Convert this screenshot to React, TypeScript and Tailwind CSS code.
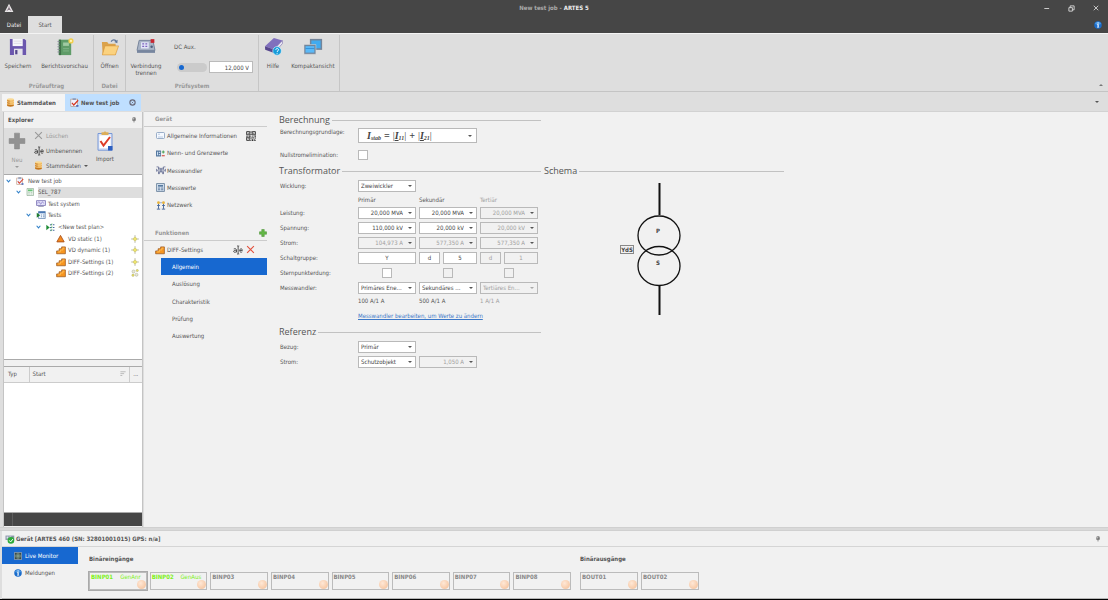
import type { ReactNode } from 'react';

type IconProps = { className?: string };

function Svg({ box = '0 0 16 16', className = 'size-2.5', children }: { box?: string; className?: string; children: ReactNode }) {
  return (
    <svg viewBox={box} className={`shrink-0 ${className}`} fill="none" aria-hidden="true">
      {children}
    </svg>
  );
}

const LogoIcon = () => (
  <Svg className="size-[10px]">
    <path d="M8 1 15 14.500H1z" fill="#e8e6e6" />
    <path d="M8 5.500v4M8 9.500l-3.500 2.500M8 9.500l3.500 2.500" stroke="#80607c" strokeWidth="1.200" />
    <circle cx="8" cy="9.500" r="1.300" fill="#555" />
  </Svg>
);

const SaveIcon = () => (
  <Svg className="size-[18px]">
    <path d="M.8.8h12.900L15.200 2.200v13H.8z" fill="#6b57ae" />
    <path d="M3.200.8h9v6.400h-9z" fill="#f6f6fa" />
    <path d="M4.400 9.500h7.700v5.700H4.400z" fill="#e3e1ea" />
    <path d="M5.500 10.700h2v3.800h-2z" fill="#54468c" />
    <path d="M4.200 2.800h7M4.200 4.800h7" stroke="#d5d3e0" strokeWidth=".6" />
  </Svg>
);

const ReportIcon = () => (
  <Svg className="size-[18px]">
    <path d="M2.500 1.500h11v13.700h-11z" fill="#5f9c68" />
    <path d="M2.500 1.500h2v13.700h-2z" fill="#3f7148" />
    <path d="M6.300 4h5.200v3H6.300z" fill="#9fcaa2" />
    <path d="M6.300 9.500h5.200M6.300 11.500h5.200" stroke="#83b78a" strokeWidth=".8" />
    <path d="M1.300 3.200h2M1.300 5.500h2M1.300 7.800h2M1.300 10.100h2M1.300 12.400h2" stroke="#889" strokeWidth=".8" />
    <circle cx="13.300" cy="2.600" r="2.300" fill="#f2cf4e" />
    <circle cx="13.300" cy="2.600" r="1" fill="#fff6bd" />
  </Svg>
);

const FolderIcon = () => (
  <Svg className="size-[18px]">
    <path d="M.8 3.500h4.700l1.200 1.500H13v10H1.500z" fill="#dba24a" />
    <path d="M3.500 7h12.100l-2.800 8H1.200z" fill="#fbd27f" stroke="#d9993c" strokeWidth=".6" />
    <path d="M9 3.200c1.300-2 3.700-2 4.800.2" stroke="#60779a" strokeWidth="1.100" />
    <path d="m14.800 1.500-.3 3.100-2.700-1.100z" fill="#60779a" />
  </Svg>
);

const DisconnectIcon = () => (
  <Svg className="size-5">
    <path d="M2.500 2.700h11l1.700 8H.8z" fill="#a9b4c6" stroke="#6d7b93" strokeWidth=".7" />
    <path d="M4 4.200h6.200v5H4z" fill="#e2e5f7" />
    <path d="M5 5.500h1.500M7.500 5.500H9M5 7.500h1.500M7.500 7.500H9" stroke="#7b63bd" strokeWidth=".9" />
    <path d="M.8 10.700h14.400v2H.8z" fill="#77869f" />
    <path d="M11.700 1.700h3v3h-3z" fill="#c72630" />
    <circle cx="12.500" cy="7.800" r="1" fill="#4d5f7d" />
  </Svg>
);

const HelpBookIcon = () => (
  <Svg className="size-[19px]">
    <path d="M8.300.8 15.500 3l-7 7.500L.8 7.700z" fill="#8070bd" />
    <path d="m.8 7.700 7.700 2.800v3L1 10.700z" fill="#57478e" />
    <path d="m8.500 10.500 7-7.500v2.500l-7 8z" fill="#eeecf5" stroke="#7567aa" strokeWidth=".5" />
    <circle cx="11" cy="11.700" r="3.600" fill="#159cda" stroke="#e9f6fb" strokeWidth=".5" />
    <path d="M9.900 10.900c0-1.600 2.500-1.500 2.300 0-.1.800-1.200.8-1.200 1.700" stroke="#fff" strokeWidth=".8" />
    <circle cx="11" cy="13.700" r=".5" fill="#fff" />
  </Svg>
);

const CompactIcon = () => (
  <Svg className="size-5">
    <path d="M5.500 1.500h9.800v8.800H5.500z" fill="#73859a" />
    <path d="M6.700 2.800h7.400v6.200H6.700z" fill="#41abf0" />
    <path d="M.8 6h9.500v7.800H.8z" fill="#73859a" stroke="#dedede" strokeWidth=".4" />
    <path d="M2 7.300h7.100v5.200H2z" fill="#5ab9f8" />
    <path d="M2 9.200h7.100" stroke="#2f8fd8" strokeWidth=".7" />
  </Svg>
);

const DatabaseIcon = () => (
  <Svg className="size-[9px]">
    <path d="M2 2.500h5v11H2z" fill="#cf7f21" />
    <path d="M7 2.500h7v11H7z" fill="#efb152" />
    <ellipse cx="8" cy="2.500" rx="6" ry="2" fill="#f9d993" />
    <ellipse cx="8" cy="13.500" rx="6" ry="2" fill="#c4761c" />
    <path d="M2 6.200c2 1.600 10 1.600 12 0M2 10c2 1.600 10 1.600 12 0" stroke="#fbe2a9" strokeWidth="1.300" />
  </Svg>
);

const JobIcon = ({ className = 'size-[9px]' }: IconProps) => (
  <Svg className={className}>
    <path d="M1 1.500h13v13.700H1z" fill="#b98a6a" />
    <path d="M2 2.500h11v11.700H2z" fill="#eef2ff" />
    <path d="M4.500.5h6v3h-6z" fill="#8c9bb8" />
    <path d="m3.500 8.500 3.200 4L14.500 4" stroke="#d63822" strokeWidth="2.200" />
    <path d="M11 12.500h4v3h-4z" fill="#4469c1" />
  </Svg>
);

const ImportIcon = () => (
  <Svg box="0 0 16 20" className="h-5 w-4">
    <path d="M1 2.500h14v16.700H1z" fill="#dbe4f6" stroke="#6d91d6" strokeWidth=".9" />
    <path d="M2.500 4.500h11v12.500h-11z" fill="#fff" />
    <path d="M4.500 1.300h7V4h-7z" fill="#dcae58" />
    <circle cx="8" cy="1.700" r="1.300" fill="#dcae58" />
    <path d="m3.500 10 3 4.500 6.500-8.500" stroke="#dd3c28" strokeWidth="2" />
    <path d="M11 15h4.500v4.500H11z" fill="#2c5fc0" />
  </Svg>
);

const PinIcon = () => (
  <Svg className="size-[6px]">
    <path d="M5 2h6v6H5zM3 8.500h10M8 9v5.500M10 2v6" stroke="#555" strokeWidth="1.700" />
  </Svg>
);

const PlusIcon = () => (
  <Svg className="size-[18px]">
    <path d="M5.800 1h4.400v4.800H15v4.400h-4.800V15H5.800v-4.800H1V5.800h4.800z" fill="#929292" stroke="#858585" strokeWidth=".5" />
  </Svg>
);

const CrossIcon = ({ className = 'size-[9px] text-[#999]' }: IconProps) => (
  <Svg className={className}>
    <path d="m2 2 12 12M14 2 2 14" stroke="currentColor" strokeWidth="2" />
  </Svg>
);

const RenameIcon = () => (
  <Svg className="size-[10px]">
    <path d="M1.200 6.300c2.800-1 4.300 0 4.300 1.700v3.800M5.500 8.500C3 8.500 1 8.800 1 10.300s3.200 2.100 4.500 0" stroke="#333" strokeWidth="1.300" />
    <path d="M10.700 8.700h4.300c0-3.500-4.300-3.500-4.300.2 0 2.700 2.600 3.300 4.100 2" stroke="#333" strokeWidth="1.300" />
    <path d="M8.200 2v12M6.500 1.500c1 0 1.300.2 1.700.7.400-.5.700-.7 1.700-.7M6.500 14.500c1 0 1.300-.2 1.700-.7.400.5.700.7 1.700.7" stroke="#222" strokeWidth="1.200" />
  </Svg>
);

const DeviceIcon = () => (
  <Svg className="size-2">
    <path d="M2 1h13v14H2z" fill="#e8f3ea" stroke="#84a48a" strokeWidth="1.200" />
    <path d="M4 3h9v3.500H4z" fill="#65c274" />
    <path d="M4.500 9h3M4.500 12h3M9.500 9h3M9.500 12h3" stroke="#92a896" />
  </Svg>
);

const TestSystemIcon = () => (
  <Svg box="0 0 18 12" className="h-[7px] w-[10px]">
    <path d="M1 .8h16v8.700H1z" fill="#e5e4fa" stroke="#695fa9" strokeWidth="1.300" />
    <path d="M3 6c1-4 3-4 4-1s2 3 3 0 3-2 4 1" stroke="#6a58b8" />
    <path d="M4 11.200h10" stroke="#77779b" strokeWidth="1.300" />
  </Svg>
);

const TestsIcon = () => (
  <Svg box="0 0 18 16" className="h-2 w-[10px]">
    <path d="M4 1h13.500v14H4z" fill="#ecf2fb" stroke="#456b9f" strokeWidth="1.200" />
    <path d="M4 1h13.500v3.500H4z" fill="#4b78b4" />
    <path d="M9 8h2M13 8h3M9 11.500h2M13 11.500h3" stroke="#5177a5" strokeWidth="1.400" />
    <path d="m.5 3.500 7 5-7 5z" fill="#1f7c2f" />
  </Svg>
);

const PlanIcon = () => (
  <Svg className="size-[9px]">
    <path d="M7 3h2.500M7 8h2.500M7 13h2.500M12 3h3M12 8h3M12 13h3" stroke="#47699f" strokeWidth="1.800" />
    <path d="M10.500 1 9 4.500M10.500 6 9 9.500M10.500 11 9 14.500" stroke="#35a04a" strokeWidth="1.300" />
    <path d="m.5 3 6 5-6 5z" fill="#1f8c36" />
  </Svg>
);

const StaticIcon = () => (
  <Svg className="size-[9px]">
    <path d="M8 2.500 14.500 14h-13z" fill="#f58a1f" stroke="#a84f17" strokeWidth="1.600" strokeLinejoin="round" />
  </Svg>
);

const StepsIcon = () => (
  <Svg className="size-[10px]">
    <path d="M1 9.500h4V6h4V3h6v11H1z" fill="#f7951f" stroke="#9c5a20" strokeWidth="1.200" strokeLinejoin="round" />
    <path d="M3 11h4V8h4V5h2.500" stroke="#ffc25c" strokeWidth="1.300" />
  </Svg>
);

const SparkIcon = () => (
  <Svg className="size-2">
    <path d="M8 0v16M0 8h16" stroke="#9a9a86" strokeWidth="1.200" />
    <path d="M8 3.500 12.500 8 8 12.500 3.500 8z" fill="#efe56c" stroke="#b9b26a" />
  </Svg>
);

const SparksIcon = () => (
  <Svg className="size-2">
    <circle cx="5" cy="5" r="3" fill="#e9e9d4" stroke="#a7a794" />
    <circle cx="12.500" cy="3" r="2.200" fill="#f0e562" stroke="#a7a764" />
    <circle cx="4" cy="12.500" r="2.300" fill="#f0e562" stroke="#a7a764" />
    <circle cx="11" cy="11.500" r="3" fill="#e9e9d4" stroke="#a7a794" />
  </Svg>
);

const CardIcon = () => (
  <Svg box="0 0 18 14" className="h-[7px] w-[9px]">
    <rect x="1" y="1" width="16" height="12" rx="2" fill="#f5f9ff" stroke="#7c96ba" strokeWidth="1.500" />
    <path d="M4 4.500h4M4 10h10" stroke="#a6bcd8" strokeWidth="1.500" />
  </Svg>
);

const LimitsIcon = () => (
  <Svg box="0 0 18 14" className="h-[7px] w-[9px]">
    <path d="M0 1h10v12H0z" fill="#55789f" />
    <path d="M2 3.500h2v7H2zM5.500 3.500h3v2.500h-3zM5.500 8h3v2.500h-3z" fill="#c9dcf0" />
    <path d="M11.500 4h6M14.500 1v6" stroke="#3c9a48" strokeWidth="1.800" />
    <path d="M11.500 11.500h6" stroke="#d03a30" strokeWidth="2" />
  </Svg>
);

const ConverterIcon = () => (
  <Svg box="0 0 18 16" className="h-[9px] w-[10px]">
    <path d="M1 1.500h3.500v4M13.500 5.500v-4H17M1 5v5M17 5v5M6 14.500v-3M12 14.500v-3M4.500 5.500c-2 1-2 4 0 5v4M13.500 5.500c2 1 2 4 0 5v4" stroke="#4b5580" strokeWidth="1.200" />
    <ellipse cx="7" cy="7.500" rx="1.600" ry="4.500" stroke="#3f4d7b" strokeWidth="1.200" />
    <ellipse cx="11" cy="7.500" rx="1.600" ry="4.500" stroke="#3f4d7b" strokeWidth="1.200" />
  </Svg>
);

const ReadingsIcon = () => (
  <Svg className="size-[9px]">
    <path d="M1 1h14v14H1z" fill="#d7e3f1" stroke="#5d7692" strokeWidth="1.400" />
    <path d="M3.500 3.500h9v3h-9z" fill="#577a9f" />
    <path d="M3.500 9h4M9 9h4M3.500 12h4M9 12h4" stroke="#4e6c90" strokeWidth="1.500" />
  </Svg>
);

const NetworkIcon = () => (
  <Svg box="0 0 18 16" className="h-[9px] w-[10px]">
    <path d="M4.500 5v9M1.500 14.500h6M13.500 5v9M10.500 14.500h6M2 8h5M11 8h5" stroke="#47679a" strokeWidth="1.700" />
    <path d="M7 3h4" stroke="#7d93b5" strokeWidth="1.300" />
    <circle cx="4.500" cy="3" r="2.500" fill="#e7b23a" />
    <circle cx="13.500" cy="3" r="2.500" fill="#e7b23a" />
  </Svg>
);

const QrIcon = () => (
  <Svg className="size-[10px]">
    <path d="M1 1h5v5H1zM10 1h5v5h-5zM1 10h5v5H1z" stroke="#333" strokeWidth="1.500" />
    <path
      d="M2.700 2.700h1.600v1.600H2.700zM11.700 2.700h1.600v1.600h-1.600zM2.700 11.700h1.600v1.600H2.700zM7.400 0h1.200v3H7.400zM7 4.500h2v2H7zM0 7.400h3v1.200H0zM4.500 7h3v2h-3zM9 7.400h3v1.400H9zM13.500 7H16v2h-2.500zM7.400 10h1.500v2.500H7.400zM10 10h2.500v2H10zM13.500 10.500H16V12h-2.500zM9 13h2.500v2.800H9zM12.500 13H14v3h-1.500zM15 14h1v2h-1zM7 14.500h1V16H7z"
      fill="#333"
    />
  </Svg>
);

const AddIcon = () => (
  <Svg className="size-2">
    <path d="M5.500 1h5v4.500H15v5h-4.500V15h-5v-4.500H1v-5h4.500z" fill="#63b746" stroke="#428d2d" />
  </Svg>
);

const ConnectedIcon = () => (
  <Svg className="size-[10px]">
    <path d="M.8 2.500h14v7h-14z" fill="#8b95a8" />
    <path d="M2.500 4h3v3h-3zM7 4h3v3H7z" fill="#dde3ee" />
    <circle cx="9.500" cy="10.200" r="5.300" fill="#2daa3a" />
    <path d="m6.800 10.200 2.200 2.500 3.500-4.500" stroke="#fff" strokeWidth="1.600" />
  </Svg>
);

const MonitorIcon = () => (
  <Svg className="size-2">
    <path d="M.8.8h14.400v14.400H.8z" fill="#3b4a48" stroke="#b7c0c8" strokeWidth="1.200" />
    <path d="M8 2v12M2 8h12" stroke="#b7d9bc" strokeWidth="1.300" />
    <path d="M2.500 5h11M2.500 11h11M5 2.500v11M11 2.500v11" stroke="#7d9a86" strokeWidth=".6" />
  </Svg>
);

const InfoIcon = () => (
  <Svg className="size-2">
    <circle cx="8" cy="8" r="7.500" fill="#1a6ccb" />
    <path d="M2 6c2-6 10-6 12 0-3 2-9 2-12 0z" fill="#4d9be6" />
    <path d="M7 2.800h2.400V5H7zM6.200 6.500h3.200v5.300h1v1.400H6v-1.400h1V8h-.8z" fill="#fff" />
  </Svg>
);

const Caret = ({ className = '' }: IconProps) => (
  <svg viewBox="0 0 8 4" className={`h-0.5 w-1 shrink-0 ${className}`} aria-hidden="true">
    <path d="M0 0h8L4 4z" fill="currentColor" />
  </svg>
);

const Chevron = () => (
  <Svg box="0 0 8 6" className="h-[4px] w-[5px]">
    <path d="m1 1 3 3.500L7 1" stroke="#2e7fc8" strokeWidth="1.700" />
  </Svg>
);

function RibbonButton({ icon, label, className }: { icon: ReactNode; label: string; className: string }) {
  return (
    <button type="button" className={`flex flex-col items-center ${className}`}>
      <span className="flex h-[23px] items-center">{icon}</span>
      <span className="mt-1 leading-[7px]">{label}</span>
    </button>
  );
}

function RibbonGroup({ caption, className, children }: { caption: string; className: string; children: ReactNode }) {
  return (
    <section className={`flex flex-col border-r border-[#c6c6c6] ${className}`}>
      <div className="flex flex-1">{children}</div>
      <h2 className="h-[9px] text-center font-bold text-[#999]">{caption}</h2>
    </section>
  );
}

const tree = [
  { label: 'New test job', icon: <JobIcon className="size-2" />, open: true, pad: 'pl-0.5' },
  { label: 'SEL_787', icon: <DeviceIcon />, open: true, pad: 'pl-3', selected: true },
  { label: 'Test system', icon: <TestSystemIcon />, pad: 'pl-[22px]' },
  { label: 'Tests', icon: <TestsIcon />, open: true, pad: 'pl-[22px]' },
  { label: '<New test plan>', icon: <PlanIcon />, open: true, pad: 'pl-8' },
  { label: 'VD static (1)', icon: <StaticIcon />, pad: 'pl-[42px]', end: <SparkIcon /> },
  { label: 'VD dynamic (1)', icon: <StepsIcon />, pad: 'pl-[42px]', end: <SparkIcon /> },
  { label: 'DIFF-Settings (1)', icon: <StepsIcon />, pad: 'pl-[42px]', end: <SparkIcon /> },
  { label: 'DIFF-Settings (2)', icon: <StepsIcon />, pad: 'pl-[42px]', end: <SparksIcon /> },
];

function Explorer() {
  return (
    <aside className="mt-px flex w-[140px] shrink-0 flex-col border-x border-[#c4c4c4] bg-[#f1f1f1]">
      <header className="flex h-4 shrink-0 items-center justify-between pr-[5px] pl-1">
        <h2 className="font-bold">Explorer</h2>
        <button type="button" aria-label="Anheften"><PinIcon /></button>
      </header>
      <div className="flex h-[46px] shrink-0 bg-[#dedede]">
        <button type="button" className="flex w-[26px] flex-col items-center pt-1 text-[#999]">
          <PlusIcon />
          <span className="mt-1.5">Neu</span>
          <Caret className="mt-0.5" />
        </button>
        <div className="flex w-[58px] flex-col pl-1 text-nowrap">
          <button type="button" className="flex h-[15px] items-center gap-[3px] text-[#999]"><CrossIcon />Löschen</button>
          <button type="button" className="flex h-[15px] items-center gap-0.5"><RenameIcon />Umbenennen</button>
          <button type="button" className="flex h-[15px] items-center gap-[3px]"><DatabaseIcon />Stammdaten<Caret /></button>
        </div>
        <button type="button" className="flex w-[34px] flex-col items-center pt-[3px]">
          <ImportIcon />
          <span className="mt-1">Import</span>
        </button>
      </div>
      <div className="h-[186px] shrink-0 border-y border-[#aaa] bg-white">
        <ul className="flex h-[104px] flex-col">
          {tree.map((n) => (
            <li key={n.label} className={`flex flex-1 items-center ${n.pad}`}>
              <span className="flex w-[10px] shrink-0">{n.open && <Chevron />}</span>
              <span className="flex w-3 shrink-0">{n.icon}</span>
              <span className={`flex flex-1 items-center self-stretch text-nowrap ${n.selected ? 'bg-[#dedede]' : ''}`}>{n.label}</span>
              {n.end && <span className="pr-[3px]">{n.end}</span>}
            </li>
          ))}
        </ul>
      </div>
      <div className="mt-1.5 flex flex-1 flex-col border-t border-[#aaa] bg-white">
        <table className="w-full table-fixed border-collapse text-left">
          <thead>
            <tr className="h-[15px] border-b border-[#ccc] bg-[#f1f1f1]">
              <th className="w-[25px] border-r border-[#ccc] pl-1 font-normal">Typ</th>
              <th className="border-r border-[#ccc] px-[3px] font-normal">
                <span className="flex items-center justify-between">
                  Start
                  <Svg className="size-[6px]"><path d="M1 2h14M1 7h10M1 12h5" stroke="#aaa" strokeWidth="2" /></Svg>
                </span>
              </th>
              <th className="w-[13px] text-center font-normal">...</th>
            </tr>
          </thead>
          <tbody />
        </table>
      </div>
      <div className="mb-px h-[14px] shrink-0 border-t border-[#aaa] bg-[#464646] pl-2">
        <div className="h-full w-px bg-[#5d5d5d]" />
      </div>
    </aside>
  );
}

const deviceLinks = [
  { label: 'Allgemeine Informationen', icon: <CardIcon /> },
  { label: 'Nenn- und Grenzwerte', icon: <LimitsIcon /> },
  { label: 'Messwandler', icon: <ConverterIcon /> },
  { label: 'Messwerte', icon: <ReadingsIcon /> },
  { label: 'Netzwerk', icon: <NetworkIcon /> },
];

const functionLinks = ['Allgemein', 'Auslösung', 'Charakteristik', 'Prüfung', 'Auswertung'];

function Navigation() {
  return (
    <nav className="flex w-[123px] shrink-0 flex-col">
      <h2 className="flex h-[15px] items-center border-b border-[#ccc] pl-[11px] font-bold text-[#999]">Gerät</h2>
      <ul className="flex h-[87px] flex-col">
        {deviceLinks.map((l, i) => (
          <li key={l.label} className="flex flex-1 items-center pr-[11px] pl-3">
            <a href="#" className="flex flex-1 items-center text-nowrap"><span className="flex w-[11px] shrink-0">{l.icon}</span>{l.label}</a>
            {i === 0 && <button type="button" aria-label="QR-Code"><QrIcon /></button>}
          </li>
        ))}
      </ul>
      <div className="mt-[11px] flex h-4 items-center justify-between border-b border-[#ccc] pl-[11px]">
        <h2 className="font-bold text-[#999]">Funktionen</h2>
        <button type="button" aria-label="Funktion hinzufügen"><AddIcon /></button>
      </div>
      <div className="flex h-[17px] items-center gap-[3px] pr-3 pl-[11px]">
        <a href="#" className="flex flex-1 items-center gap-0.5 text-nowrap"><StepsIcon />DIFF-Settings</a>
        <button type="button" aria-label="Umbenennen"><RenameIcon /></button>
        <button type="button" aria-label="Löschen"><CrossIcon className="size-[9px] text-[#e2503c]" /></button>
      </div>
      <ul className="flex h-[87px] flex-col pl-[17px]">
        {functionLinks.map((l, i) => (
          <li key={l} className="flex flex-1">
            <a href="#" className={`flex flex-1 items-center pl-[11px] ${i === 0 ? 'bg-[#1768d0] text-white' : ''}`}>{l}</a>
          </li>
        ))}
      </ul>
    </nav>
  );
}

function Section({ title, className = '', children }: { title: string; className?: string; children: ReactNode }) {
  return (
    <section className={className}>
      <h2 className="flex h-3 items-center gap-0.5 font-['Open_Sans',sans-serif] text-[9px] leading-3">
        {title}
        <span className="h-px flex-1 bg-[#c2c2c2]" />
      </h2>
      {children}
    </section>
  );
}

const box = 'h-3 w-full rounded-none border border-[#b9b9b9]';
const enabled = 'bg-white text-[#444]';
const disabled = 'bg-[#f1f1f1] text-[#a0a0a0]';

function Drop({ label, value, right = false, off = false }: { label: string; value: string; right?: boolean; off?: boolean }) {
  return (
    <span className="relative flex">
      <select
        aria-label={label}
        disabled={off}
        className={`${box} appearance-none pl-0.5 opacity-100 ${right ? 'pr-3 [text-align-last:right]' : 'pr-2'} ${off ? disabled : enabled}`}
      >
        <option>{value}</option>
      </select>
      <Caret className={`pointer-events-none absolute top-[5px] right-1 ${off && !right ? 'text-[#aaa]' : 'text-[#555]'}`} />
    </span>
  );
}

function Field({ label, value, off = false }: { label: string; value: string; off?: boolean }) {
  return <input aria-label={label} defaultValue={value} disabled={off} className={`${box} min-w-0 text-center ${off ? disabled : enabled}`} />;
}

function Check({ id, label, off = false }: { id?: string; label?: string; off?: boolean }) {
  return (
    <input
      type="checkbox"
      id={id}
      aria-label={label}
      disabled={off}
      className={`size-[10px] shrink-0 appearance-none border border-[#b9b9b9] ${off ? 'bg-[#f1f1f1]' : 'bg-white'}`}
    />
  );
}

function Row({ label, className = 'h-[15px]', children }: { label: string; className?: string; children: ReactNode }) {
  return (
    <div className={`grid grid-cols-[75px_58px_58px_58px] items-center gap-x-[3px] pl-px ${className}`}>
      <span>{label}</span>
      {children}
    </div>
  );
}

function Current({ index }: { index: string }) {
  return (
    <span>
      <span className="font-normal not-italic">|</span>
      <span className="underline">I</span>
      <sub className="text-[6px]">{index}</sub>
      <span className="font-normal not-italic">|</span>
    </span>
  );
}

function Form() {
  return (
    <div className="flex flex-col">
      <Section title="Berechnung">
        <div className="grid h-[19px] grid-cols-[75px_119px] gap-x-[3px] pt-0.5 pl-px">
          <span>Berechnungsgrundlage:</span>
          <button
            type="button"
            aria-haspopup="listbox"
            aria-label="Berechnungsgrundlage"
            className="flex h-[15px] items-center justify-between border border-[#b9b9b9] bg-white pr-1 pl-2"
          >
            <span className="flex gap-[3px] font-['Liberation_Serif',serif] text-[10px] font-bold text-[#444] italic">
              <span>I<sub className="text-[6px]">stab</sub></span>
              <span>=</span>
              <Current index="11" />
              <span>+</span>
              <Current index="21" />
            </span>
            <Caret />
          </button>
        </div>
        <div className="grid h-5 grid-cols-[75px_119px] items-center gap-x-[3px] pl-px">
          <label htmlFor="zero">Nullstromelimination:</label>
          <Check id="zero" />
        </div>
      </Section>

      <Section title="Transformator">
        <Row label="Wicklung:" className="h-[17px]"><Drop label="Wicklung" value="Zweiwickler" /></Row>
        <Row label="" className="h-[11px]">
          <span>Primär</span>
          <span>Sekundär</span>
          <span className="text-[#a0a0a0]">Tertiär</span>
        </Row>
        <Row label="Leistung:">
          <Drop right label="Leistung primär" value="20,000 MVA" />
          <Drop right label="Leistung sekundär" value="20,000 MVA" />
          <Drop right off label="Leistung tertiär" value="20,000 MVA" />
        </Row>
        <Row label="Spannung:">
          <Drop right label="Spannung primär" value="110,000 kV" />
          <Drop right label="Spannung sekundär" value="20,000 kV" />
          <Drop right off label="Spannung tertiär" value="20,000 kV" />
        </Row>
        <Row label="Strom:">
          <Drop right off label="Strom primär" value="104,973 A" />
          <Drop right off label="Strom sekundär" value="577,350 A" />
          <Drop right off label="Strom tertiär" value="577,350 A" />
        </Row>
        <Row label="Schaltgruppe:">
          <Field label="Schaltgruppe primär" value="Y" />
          <span className="grid grid-cols-[21px_1fr] gap-[3px]">
            <Field label="Schaltgruppe sekundär" value="d" />
            <Field label="Phasenlage sekundär" value="5" />
          </span>
          <span className="grid grid-cols-[21px_1fr] gap-[3px]">
            <Field off label="Schaltgruppe tertiär" value="d" />
            <Field off label="Phasenlage tertiär" value="1" />
          </span>
        </Row>
        <Row label="Sternpunkterdung:">
          <span className="flex justify-center"><Check label="Sternpunkterdung primär" /></span>
          <span className="flex justify-center"><Check off label="Sternpunkterdung sekundär" /></span>
          <span className="flex justify-center"><Check off label="Sternpunkterdung tertiär" /></span>
        </Row>
        <Row label="Messwandler:">
          <Drop label="Messwandler primär" value="Primäres Ene..." />
          <Drop label="Messwandler sekundär" value="Sekundäres ..." />
          <Drop off label="Messwandler tertiär" value="Tertiäres En..." />
        </Row>
        <Row label="" className="h-3">
          <span>100 A/1 A</span>
          <span>500 A/1 A</span>
          <span className="text-[#a0a0a0]">1 A/1 A</span>
        </Row>
        <div className="flex h-[17px] items-center pl-[79px]">
          <a href="#" className="text-[#3c78c8] underline">Messwandler bearbeiten, um Werte zu ändern</a>
        </div>
      </Section>

      <Section title="Referenz" className="mt-0.5">
        <Row label="Bezug:" className="h-[17px]"><Drop label="Bezug" value="Primär" /></Row>
        <Row label="Strom:" className="h-[14px]">
          <Drop label="Strombezug" value="Schutzobjekt" />
          <Drop right off label="Referenzstrom" value="1,050 A" />
        </Row>
      </Section>
    </div>
  );
}

function Schema() {
  return (
    <Section title="Schema" className="pt-[51px]">
      <svg viewBox="0 0 240 140" className="mt-[3px] h-[140px] w-[240px]" role="img" aria-label="Schema YdS">
        <path d="M115.500 3v32M115.500 106v29" stroke="#111" strokeWidth="2" />
        <ellipse cx="115" cy="55.500" rx="21" ry="19.500" fill="none" stroke="#111" strokeWidth="1.300" />
        <ellipse cx="115" cy="86" rx="21" ry="19.500" fill="none" stroke="#111" strokeWidth="1.300" />
        <rect x="76.500" y="65.500" width="13" height="8" fill="#f1f1f1" stroke="#888" />
        <g fontFamily="DejaVu Sans Condensed, DejaVu Sans, sans-serif" fontSize="6" fontWeight="700" fill="#444" textAnchor="middle">
          <text x="83" y="72">YdS</text>
          <text x="114" y="53">P</text>
          <text x="114" y="85">S</text>
        </g>
      </svg>
    </Section>
  );
}

const inputs = [
  { name: 'BINP01', tag: 'GenAnr', active: true },
  { name: 'BINP02', tag: 'GenAus' },
  { name: 'BINP03' },
  { name: 'BINP04' },
  { name: 'BINP05' },
  { name: 'BINP06' },
  { name: 'BINP07' },
  { name: 'BINP08' },
];
const outputs = [{ name: 'BOUT01' }, { name: 'BOUT02' }];

function Tile({ name, tag, active }: { name: string; tag?: string; active?: boolean }) {
  return (
    <li className={`relative h-[18px] border border-[#bbb] px-px ${active ? 'outline outline-[#aaa]' : ''}`}>
      <div className={`flex justify-between pr-1 ${tag ? 'text-[#7ef01a]' : 'text-[#888]'}`}>
        <span className="font-bold">{name}</span>
        <span>{tag}</span>
      </div>
      <span className="absolute right-0 bottom-0 size-[9px] rounded-full bg-radial-[at_40%_35%] from-[#ffe8d6] to-[#f3bd94]" />
    </li>
  );
}

function DevicePanel() {
  return (
    <section className="ml-0.5 flex h-[68px] shrink-0 flex-col border-b border-[#b5b5b5] bg-[#f1f1f1]">
      <header className="flex h-4 shrink-0 items-center justify-between border-b border-[#d5d5d5] pr-[7px] pl-[3px]">
        <h2 className="flex items-center gap-px font-bold"><ConnectedIcon />Gerät [ARTES 460 (SN: 32801001015) GPS: n/a]</h2>
        <button type="button" aria-label="Anheften"><PinIcon /></button>
      </header>
      <div className="flex flex-1">
        <nav className="flex w-[76px] shrink-0 flex-col">
          <a href="#" className="flex h-[17px] items-center gap-[3px] bg-[#1768d0] pl-3 text-white"><MonitorIcon />Live Monitor</a>
          <a href="#" className="flex h-[17px] items-center gap-[3px] pl-3"><InfoIcon />Meldungen</a>
        </nav>
        <div className="flex gap-[9px] pt-2 pl-[11px]">
          <section>
            <h3 className="font-bold">Binäreingänge</h3>
            <ul className="mt-[9px] grid w-[482px] grid-cols-8 gap-[3px]">
              {inputs.map((t) => <Tile key={t.name} {...t} />)}
            </ul>
          </section>
          <section>
            <h3 className="font-bold">Binärausgänge</h3>
            <ul className="mt-[9px] grid w-[119px] grid-cols-2 gap-[3px]">
              {outputs.map((t) => <Tile key={t.name} {...t} />)}
            </ul>
          </section>
        </div>
      </div>
    </section>
  );
}

export default function App() {
  return (
    <div className="flex min-h-screen flex-col border-b border-black bg-[#dedede] font-['DejaVu_Sans_Condensed','DejaVu_Sans',sans-serif] text-[6px] leading-2 text-[#555]">
      <header className="grid h-4 grid-cols-[1fr_auto_1fr] items-center bg-[#464646] text-[#aaa]">
        <div className="pl-1"><LogoIcon /></div>
        <h1 className="font-bold">New test job - <span className="text-[#eee]">ARTES 5</span></h1>
        <div className="flex justify-end gap-[18px] pr-[9px]">
          <button type="button" aria-label="Minimieren"><Svg className="size-[7px]"><path d="M3 8h11" stroke="#ddd" strokeWidth="2" /></Svg></button>
          <button type="button" aria-label="Wiederherstellen">
            <Svg className="size-[7px]"><path d="M2 6h8v8H2zM5 6V2h9v9h-4" stroke="#ddd" strokeWidth="2" /></Svg>
          </button>
          <button type="button" aria-label="Schließen"><CrossIcon className="size-[6px] text-[#eee]" /></button>
        </div>
      </header>

      <nav className="flex h-[17px] items-stretch bg-[#464646]">
        <button type="button" className="w-7 text-[#eee]">Datei</button>
        <button type="button" className="w-[34px] bg-[#dedede]">Start</button>
        <button type="button" aria-label="Info" className="ml-auto pr-[6px]"><InfoIcon /></button>
      </nav>

      <div className="flex h-[59px] border-t border-b border-t-[#f4f4f4] border-b-[#c4c4c4] pt-px">
        <RibbonGroup caption="Prüfauftrag" className="w-[94px]">
          <RibbonButton icon={<SaveIcon />} label="Speichern" className="w-9" />
          <RibbonButton icon={<ReportIcon />} label="Berichtsvorschau" className="w-[57px]" />
        </RibbonGroup>
        <RibbonGroup caption="Datei" className="w-8">
          <RibbonButton icon={<FolderIcon />} label="Öffnen" className="w-full" />
        </RibbonGroup>
        <RibbonGroup caption="Prüfsystem" className="w-[133px]">
          <RibbonButton icon={<DisconnectIcon />} label="Verbindung trennen" className="w-10" />
          <div className="flex flex-1 flex-col pr-[5px] pl-2">
            <label htmlFor="dc" className="mt-2">DC Aux.</label>
            <div className="mt-[10px] flex items-center justify-between">
              <button type="button" role="switch" aria-checked="false" aria-label="DC Aux. einschalten" className="ml-[3px] flex h-[9px] w-[30px] items-center rounded-full bg-[#cbcbcb] pl-0.5">
                <span className="size-[5px] rounded-full bg-[#1768d0]" />
              </button>
              <input id="dc" defaultValue="12,000 V" className="h-3 w-11 border border-[#bbb] bg-white px-[3px] text-right text-[#444]" />
            </div>
          </div>
        </RibbonGroup>
        <RibbonGroup caption="" className="w-[81px]">
          <RibbonButton icon={<HelpBookIcon />} label="Hilfe" className="w-7" />
          <RibbonButton icon={<CompactIcon />} label="Kompaktansicht" className="w-[52px]" />
        </RibbonGroup>
        <button type="button" aria-label="Menüband minimieren" className="mt-auto mr-[5px] mb-[5px] ml-auto"><Caret className="rotate-180 text-[#777]" /></button>
      </div>

      <div className="flex h-[19px] items-end pl-0.5 font-bold">
        <button type="button" className="flex h-[17px] w-[63px] items-center gap-0.5 bg-[#f4f4f4] pl-1"><DatabaseIcon />Stammdaten</button>
        <button type="button" className="flex h-[17px] w-[76px] items-center bg-[#bfdfff] pl-[5px]">
          <JobIcon /><span className="ml-0.5">New test job</span>
          <Svg className="mr-[5px] ml-auto size-[7px]"><circle cx="8" cy="8" r="6" stroke="#667" strokeWidth="2.500" /><path d="m6 6 4 4M10 6l-4 4" stroke="#667" strokeWidth="1.500" /></Svg>
        </button>
        <button type="button" aria-label="Registerkarten" className="mr-[9px] mb-2 ml-auto"><Caret /></button>
      </div>

      <main className="flex flex-1 pl-[3px]">
        <Explorer />
        <div className="ml-px flex flex-1 border-t border-[#d2d2d2] bg-[#f1f1f1]">
          <Navigation />
          <div className="grid grid-cols-[262px_240px] gap-x-[3px] pt-0.5 pl-3">
            <Form />
            <Schema />
          </div>
        </div>
      </main>
      <div className="h-1 shrink-0 border-y border-[#d0d0d0] bg-[#d9d9d9]" />
      <DevicePanel />
    </div>
  );
}
